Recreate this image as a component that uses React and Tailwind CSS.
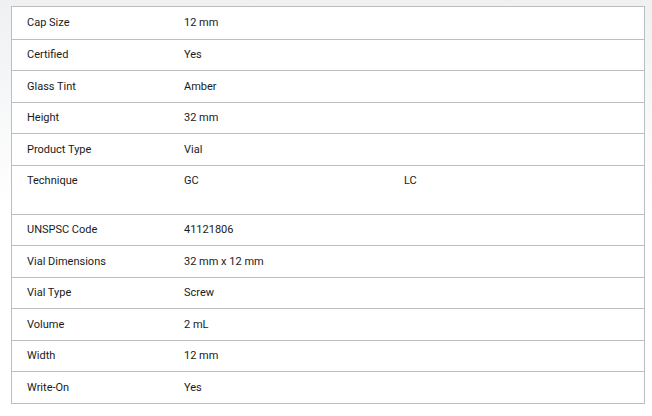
const specs = [
  { label: "Cap Size", value: "12 mm" },
  { label: "Certified", value: "Yes" },
  { label: "Glass Tint", value: "Amber" },
  { label: "Height", value: "32 mm" },
  { label: "Product Type", value: "Vial" },
  { label: "Technique", values: ["GC", "LC"] },
  { label: "UNSPSC Code", value: "41121806" },
  { label: "Vial Dimensions", value: "32 mm x 12 mm" },
  { label: "Vial Type", value: "Screw" },
  { label: "Volume", value: "2 mL" },
  { label: "Width", value: "12 mm" },
  { label: "Write-On", value: "Yes" },
];

const App = () => {
  return (
    <div
      className="w-[652px] h-[416px] bg-gradient-to-b from-[#eef0f2] via-white to-white pt-[6px] pl-[11px]"
      style={{ fontFamily: "Roboto, 'Liberation Sans', sans-serif" }}
    >
      <div className="w-[634px] bg-white border border-[#bdbdbd]">
        {specs.map((row, i) => (
          <div
            key={row.label}
            className={`flex text-[11px] leading-[13px] text-[#1a1a1a] ${
              i > 0 ? "border-t border-[#bdbdbd]" : ""
            } ${row.values ? "h-[49px] pt-[8px]" : "h-[31.5px] items-center"}`}
          >
            <div className="w-[172px] pl-[15px] shrink-0">{row.label}</div>
            {row.values ? (
              <div className="flex">
                {row.values.map((v) => (
                  <span key={v} className="w-[220px]">
                    {v}
                  </span>
                ))}
              </div>
            ) : (
              <div>{row.value}</div>
            )}
          </div>
        ))}
      </div>
    </div>
  );
};

export default App;
